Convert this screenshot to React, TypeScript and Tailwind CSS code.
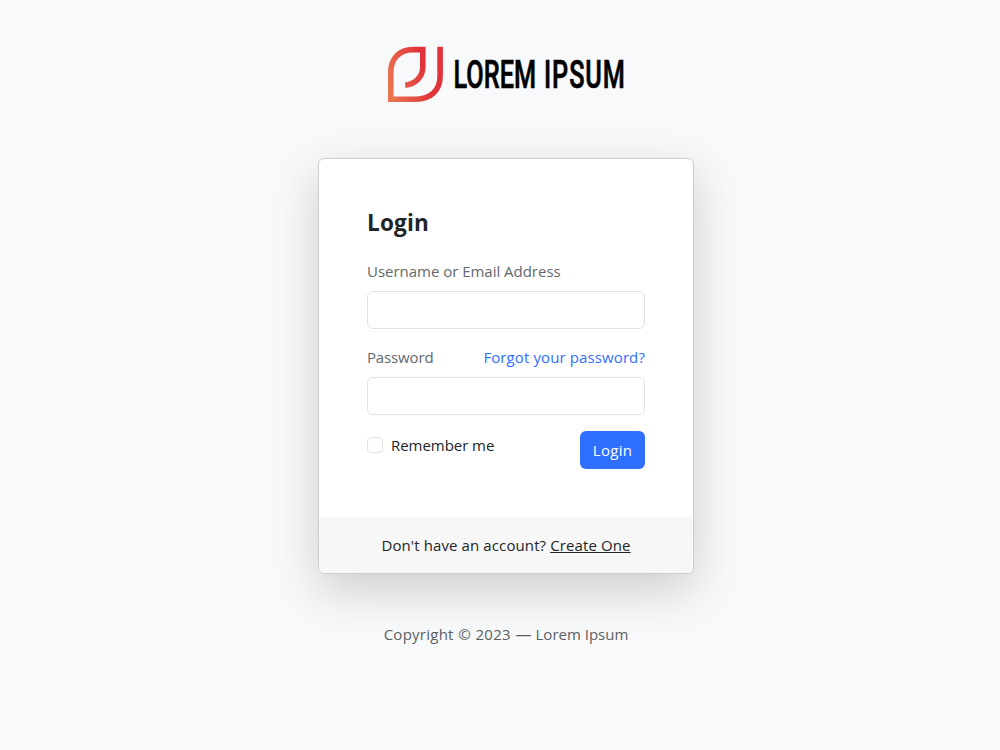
import React from 'react';

const Logo: React.FC = () => (
  <svg className="mx-auto block overflow-visible" width="244" height="62" viewBox="0 0 244 62" role="img" aria-label="Lorem Ipsum">
    <defs>
      <linearGradient id="mark" gradientUnits="userSpaceOnUse" x1="4" y1="36" x2="40" y2="26">
        <stop offset="0" stopColor="#e8734e" />
        <stop offset="1" stopColor="#e1343a" />
      </linearGradient>
    </defs>
    <g fill="none" stroke="url(#mark)" strokeWidth="5.6">
      <path d="M21.2 42.2C31 41.2 38.8 34 38.8 24V6.6H29C15.5 6.6 6.8 15.5 6.8 29V56.2H32C46.5 56.2 56.1 47.5 56.1 33V3.7" />
    </g>
    <text
      transform="translate(69.5 45) scale(0.665 1)"
      strokeWidth="0.7"
      className="fill-black stroke-black font-['Roboto',sans-serif] text-[38px] font-medium [word-spacing:2.6px]"
    >
      LOREM <tspan className="tracking-[1.4px]">IPSUM</tspan>
    </text>
  </svg>
);

const inputClass =
  'block h-[38px] w-full rounded-md border border-[#dee2e6] bg-white px-3 text-base outline-none focus:border-[#86b7fe]';

export default function App() {
  return (
    <div className="min-h-screen bg-[#f8f9fb] pl-3 font-['Open_Sans','Noto_Sans',sans-serif] text-[15px] leading-6 text-[#212529]">
      <div className="mx-auto w-[376px] pt-[43px]">
        <Logo />

        <div className="mt-[53px] overflow-hidden rounded-md border border-[#cccdce] bg-white shadow-[0_16px_48px_rgba(0,0,0,0.175)]">
          <div className="p-12">
            <h1 className="mb-6 h-7 text-[22.5px] leading-8 font-bold tracking-[0.2px]">Login</h1>

            <form onSubmit={(event) => event.preventDefault()}>
              <div className="mb-4">
                <label htmlFor="email" className="mb-2 block tracking-[-0.02px] text-[#63686c]">
                  Username or Email Address
                </label>
                <input id="email" type="text" className={inputClass} />
              </div>

              <div className="mb-4">
                <div className="mb-2 flex items-center justify-between">
                  <label htmlFor="password" className="tracking-[-0.15px] text-[#63686c]">Password</label>
                  <a href="#" className="tracking-[0.11px] text-[#2f6fff]">Forgot your password?</a>
                </div>
                <input id="password" type="password" className={inputClass} />
              </div>

              <div className="flex items-start justify-between">
                <div className="flex items-center gap-2 pt-0.5">
                  <input
                    id="remember"
                    type="checkbox"
                    className="size-4 appearance-none rounded border border-[#dee2e6] bg-white checked:bg-[#2f6fff]"
                  />
                  <label htmlFor="remember" className="tracking-[-0.05px]">Remember me</label>
                </div>
                <button type="submit" className="h-[38px] w-[65px] rounded-md bg-[#2f6fff] text-center tracking-[0.3px] text-white">
                  Login
                </button>
              </div>
            </form>
          </div>

          <div className="bg-[#f7f7f7] py-4 text-center tracking-[0.11px]">
            Don't have an account?{' '}
            <a href="#" className="underline">Create One</a>
          </div>
        </div>

        <div className="mt-12 text-center text-[#5c6064]">
          <span className="tracking-[0.25px] [word-spacing:0.4px]">Copyright © 2023 </span>
          <span className="text-base">— </span>
          <span>Lorem Ipsum</span>
        </div>
      </div>
    </div>
  );
}
